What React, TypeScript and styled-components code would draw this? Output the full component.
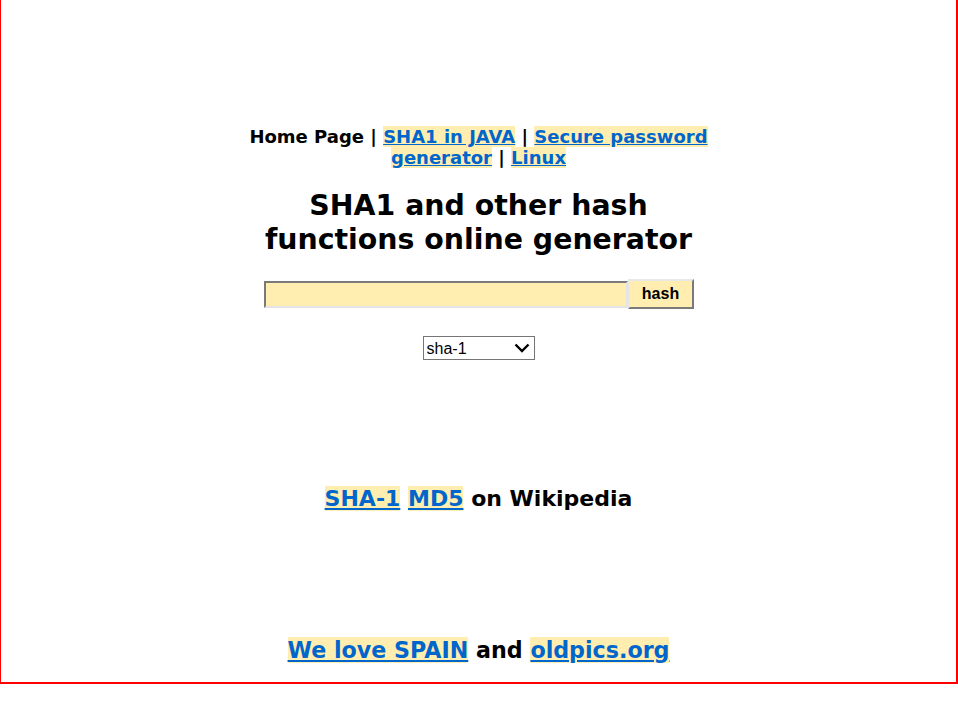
import React from "react";
import styled, { createGlobalStyle } from "styled-components";

const Global = createGlobalStyle`
  html, body { margin: 0; padding: 0; background: #fff; }
  body { font-family: Verdana, "DejaVu Sans", sans-serif; }
`;

const Frame = styled.div`
  box-sizing: border-box;
  width: 958px;
  height: 684px;
  border-left: 1px solid #ff0000;
  border-right: 2px solid #ff0000;
  border-bottom: 2px solid #ff0000;
  display: flex;
  flex-direction: column;
  align-items: center;
  padding-top: 126px;
`;

const Column = styled.div`
  width: 470px;
  display: flex;
  flex-direction: column;
  align-items: center;
  text-align: center;
`;

const Nav = styled.div`
  font-size: 18px;
  font-weight: bold;
  line-height: 21px;
  color: #000;
`;

const Link = styled.a`
  color: #0066cc;
  background: #ffeeb0;
  text-decoration: underline;
  font-weight: bold;
`;

const Title = styled.h1`
  margin: 21px 0 0;
  font-size: 28.4px;
  line-height: 34px;
  font-weight: bold;
  color: #000;
`;

const HashRow = styled.form`
  margin: 22px 0 0;
  display: flex;
  align-items: center;
`;

const TextInput = styled.input`
  box-sizing: border-box;
  width: 364px;
  height: 27px;
  background: #ffeeb0;
  border-style: solid;
  border-width: 2px;
  border-color: #7a7a7a #e4e4e4 #e4e4e4 #7a7a7a;
  padding: 0 2px;
  outline: none;
`;

const HashButton = styled.button`
  box-sizing: border-box;
  width: 66px;
  height: 30px;
  background: #ffeeb0;
  border-style: solid;
  border-width: 2px;
  border-color: #e8e8e8 #7a7a7a #7a7a7a #e8e8e8;
  font-family: "Liberation Sans", Arial, sans-serif;
  font-weight: bold;
  font-size: 16px;
  color: #000;
  padding: 0;
`;

const SelectWrap = styled.div`
  margin-top: 27px;
  position: relative;
  width: 112px;
  height: 24px;
`;

const Select = styled.select`
  box-sizing: border-box;
  width: 112px;
  height: 24px;
  appearance: none;
  background: #fff;
  border: 1px solid #767676;
  border-radius: 0;
  font-family: "Liberation Sans", Arial, sans-serif;
  font-size: 16px;
  color: #000;
  padding: 0 0 0 3px;
`;

const Chevron = styled.svg`
  position: absolute;
  right: 5px;
  top: 7px;
  pointer-events: none;
`;

const Wiki = styled.div`
  margin-top: 125px;
  font-size: 22px;
  font-weight: bold;
  line-height: 28px;
  color: #000;
`;

const Footer = styled.div`
  margin-top: auto;
  margin-bottom: 18px;
  font-size: 22.2px;
  font-weight: bold;
  line-height: 28px;
  color: #000;
  text-align: center;
`;

export default function App() {
  return (
    <>
      <Global />
      <Frame>
        <Column>
          <Nav>
            Home Page | <Link href="#">SHA1 in JAVA</Link> |{" "}
            <Link href="#">Secure password generator</Link> | <Link href="#">Linux</Link>
          </Nav>
          <Title>SHA1 and other hash functions online generator</Title>
          <HashRow onSubmit={(e) => e.preventDefault()}>
            <TextInput type="text" />
            <HashButton type="submit">hash</HashButton>
          </HashRow>
          <SelectWrap>
            <Select defaultValue="sha-1">
              <option value="sha-1">sha-1</option>
              <option value="md5">md5</option>
            </Select>
            <Chevron width="16" height="10" viewBox="0 0 16 10">
              <path d="M1.5 1.5 L8 8 L14.5 1.5" fill="none" stroke="#000" strokeWidth="2.4" />
            </Chevron>
          </SelectWrap>
          <Wiki>
            <Link href="#">SHA-1</Link> <Link href="#">MD5</Link> on Wikipedia
          </Wiki>
        </Column>
        <Footer>
          <Link href="#">We love SPAIN</Link> and <Link href="#">oldpics.org</Link>
        </Footer>
      </Frame>
    </>
  );
}
